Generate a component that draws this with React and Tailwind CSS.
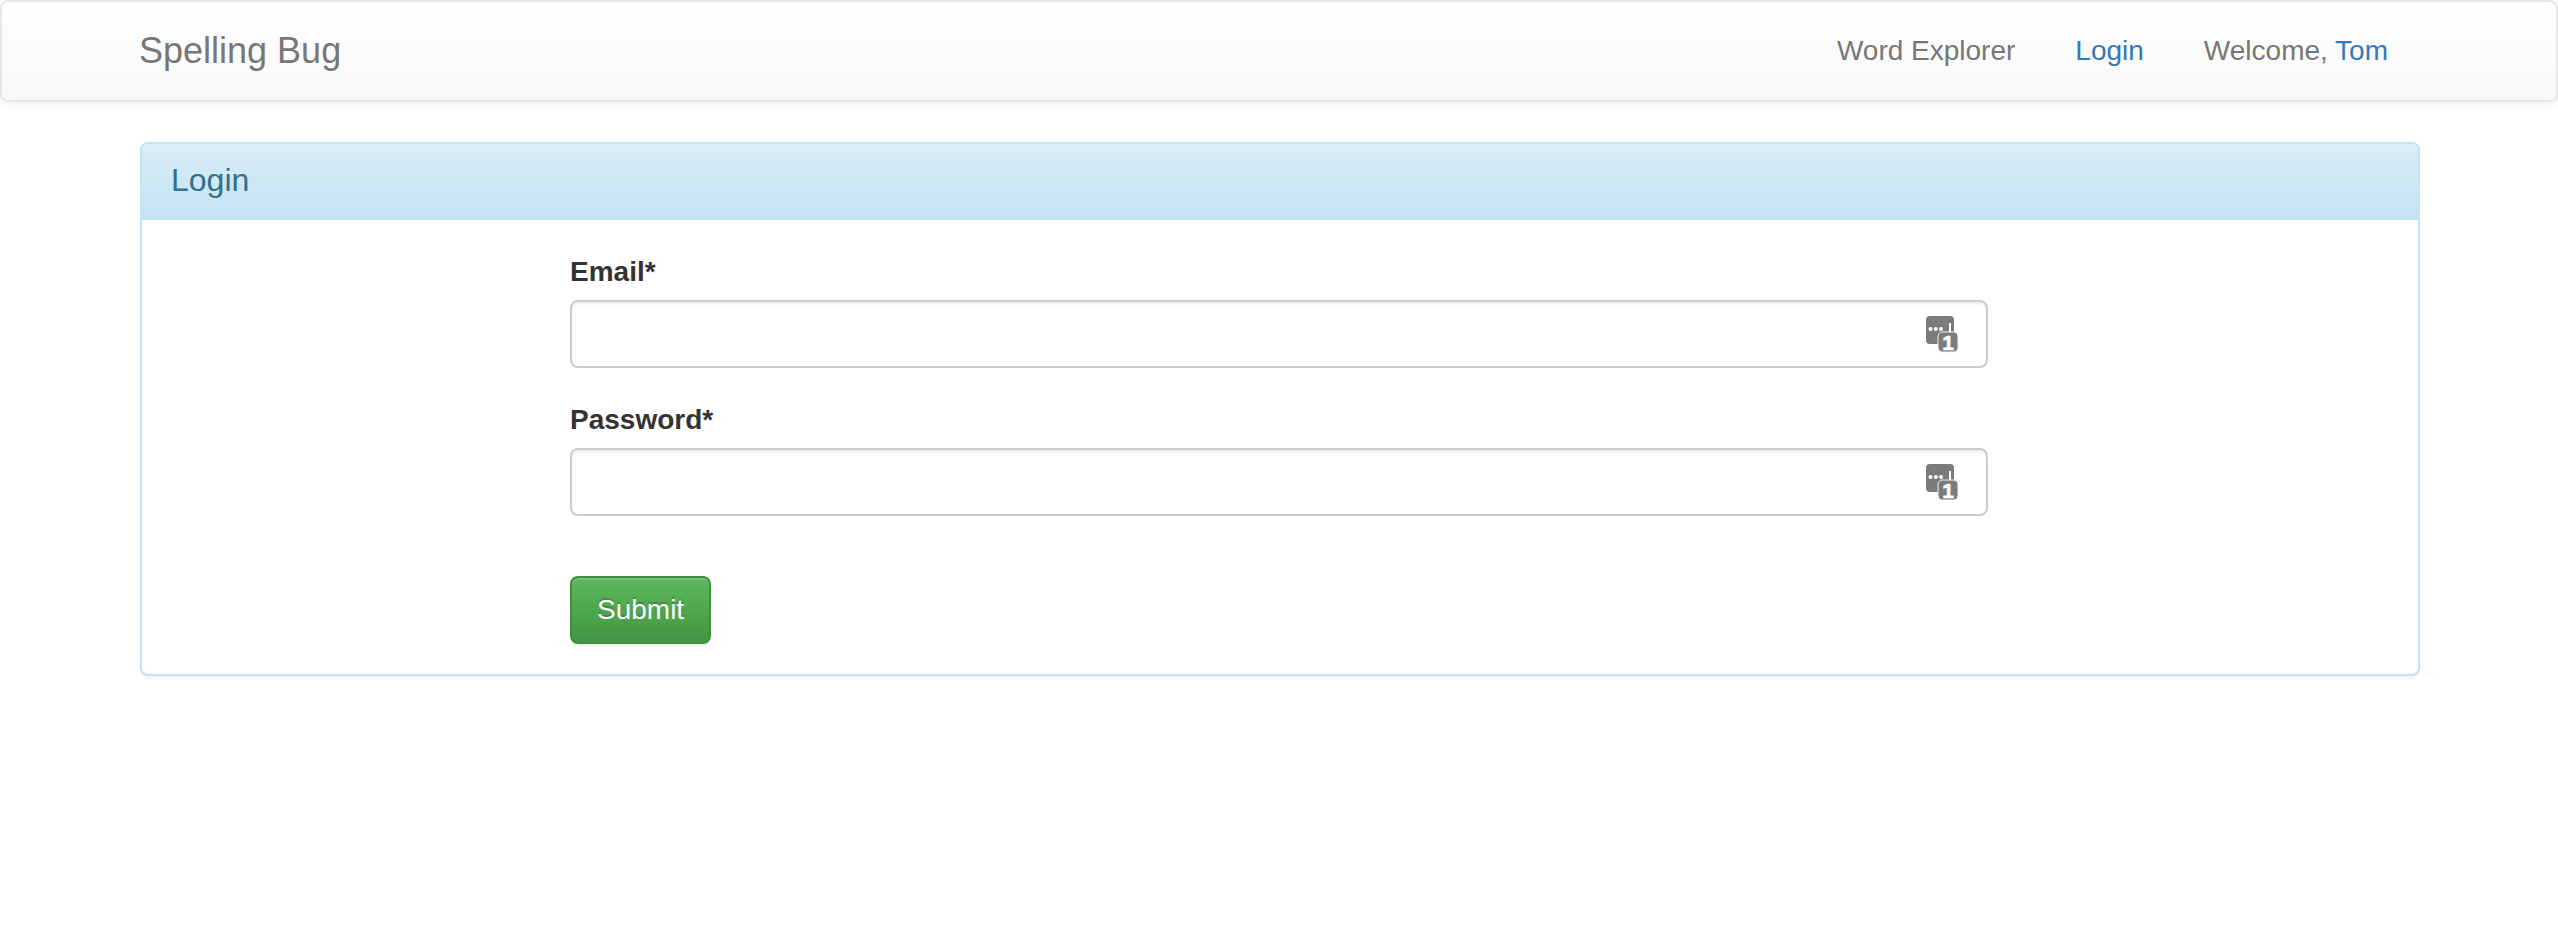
import React from 'react'

const PasswordIcon = () => (
  <svg width="34" height="38" viewBox="0 0 34 38" className="absolute right-[28px] top-[16px] pointer-events-none">
    <rect x="0" y="0" width="28" height="28" rx="4" fill="#7b7b7b" />
    <rect x="12" y="16" width="20" height="20" rx="4.5" fill="#7b7b7b" stroke="#f4f4f4" strokeWidth="1" />
    <circle cx="4.5" cy="13" r="2" fill="#ffffff" />
    <circle cx="9.8" cy="13" r="2" fill="#ffffff" />
    <circle cx="15" cy="13" r="2" fill="#ffffff" />
    <rect x="23" y="7" width="2" height="9" fill="#ffffff" />
    <text x="22" y="34" textAnchor="middle" fontSize="21" fontWeight="700" fontFamily="Liberation Sans, Arial, sans-serif" fill="#ffffff" stroke="#ffffff" strokeWidth="0.6">1</text>
  </svg>
)

const Field = ({ label, type }) => (
  <div>
    <label className="block pt-[2px] mb-[8px] text-[28px] leading-[40px] font-bold text-[#333333]">{label}</label>
    <div className="relative">
      <input
        type={type}
        className="block w-full h-[68px] px-6 text-[28px] bg-white border-2 border-[#cccccc] rounded-lg shadow-[inset_0_2px_2px_rgba(0,0,0,0.075)] outline-none"
      />
      <PasswordIcon />
    </div>
  </div>
)

const App = () => {
  return (
    <div className="min-h-[934px] bg-white font-['Liberation_Sans',Arial,sans-serif] text-[28px] text-[#333333]">
      <nav className="h-[102px] mb-10 flex items-center justify-between pl-[137px] pr-[138px] border-2 border-[#e7e7e7] rounded-lg bg-gradient-to-b from-white to-[#f8f8f8] shadow-[0_2px_10px_rgba(0,0,0,0.075)]">
        <a className="text-[36px] leading-[40px] text-[#777777]">Spelling Bug</a>
        <ul className="flex items-center gap-[60px] pr-[30px] text-[#777777] leading-[40px]">
          <li>Word Explorer</li>
          <li className="text-[#337ab7]">Login</li>
          <li>
            Welcome, <span className="text-[#337ab7]">Tom</span>
          </li>
        </ul>
      </nav>

      <div className="w-[2280px] ml-[140px]">
        <div className="border-2 border-[#bce8f1] rounded-lg bg-white shadow-[0_2px_2px_rgba(0,0,0,0.05)]">
          <div className="h-[76px] flex items-center px-[29px] pb-[3px] rounded-t-md border-b-2 border-[#bce8f1] bg-gradient-to-b from-[#d9edf7] to-[#c4e3f3]">
            <h3 className="text-[32px] leading-[36px] text-[#31708f]">Login</h3>
          </div>
          <div className="py-[30px] pl-[428px]">
            <form className="w-[1418px] flex flex-col gap-[30px] items-start">
              <div className="w-full">
                <Field label="Email*" type="email" />
              </div>
              <div className="w-full mb-[30px]">
                <Field label="Password*" type="password" />
              </div>
              <button
                type="button"
                className="block h-[68px] px-[25px] text-[28px] text-white rounded-lg border-2 border-[#3e8f3e] bg-gradient-to-b from-[#5cb85c] to-[#419641] [text-shadow:0_-2px_0_rgba(0,0,0,0.2)] shadow-[inset_0_2px_0_rgba(255,255,255,0.15),0_2px_2px_rgba(0,0,0,0.075)]"
              >
                Submit
              </button>
            </form>
          </div>
        </div>
      </div>
    </div>
  )
}

export default App
